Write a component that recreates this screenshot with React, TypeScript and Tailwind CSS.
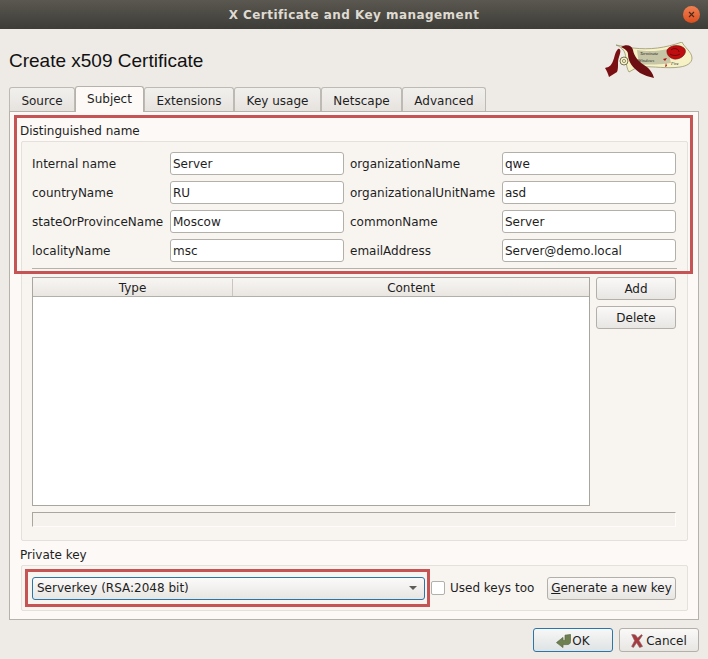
import React from 'react'

const tabs = ['Source', 'Subject', 'Extensions', 'Key usage', 'Netscape', 'Advanced']
const tabWidths: Record<string, string> = {
  Source: 'w-[66px]',
  Subject: 'w-[69px]',
  Extensions: 'w-[90px]',
  'Key usage': 'w-[87px]',
  Netscape: 'w-[81px]',
  Advanced: 'w-[84px]',
}

const fields = [
  ['Internal name', 'Server', 'organizationName', 'qwe'],
  ['countryName', 'RU', 'organizationalUnitName', 'asd'],
  ['stateOrProvinceName', 'Moscow', 'commonName', 'Server'],
  ['localityName', 'msc', 'emailAddress', 'Server@demo.local'],
]

function Field({ value }: { value: string }) {
  return (
    <div className="h-[23px] rounded-[3px] border border-[#b3b0aa] bg-white pl-[2px] pt-px leading-[21px] whitespace-nowrap">
      {value}
    </div>
  )
}

function Logo() {
  return (
    <svg width="88" height="38" viewBox="0 0 88 38" className="block">
      {/* scroll */}
      <path d="M11 3 L28 6 C45 8 60 6 77 0 C79 5 87 10 87 16 C87 21 82 24 75 25 C62 27 48 24 38 25 L31 26 L24 30 C20 24 22 14 19 9 C17 6 14 4 11 3 Z" fill="#f7f2c6" stroke="#8b8a62" strokeWidth="0.7" />
      <path d="M32 8 C44 10 54 9 63 7 L66 21 C56 23 44 22 34 23 Z" fill="#c6c6a6" />
      {/* ribbons */}
      <path d="M16 5 C21 2 27 3 28 8 C29 14 33 19 39 23 C44 26 48 31 49 36 C44 35 39 33 35 31 C28 26 23 20 23 12 C23 9 20 7 16 5 Z" fill="#6d0f12" />
      <path d="M13 7 C16 6 16 10 14 15 C12 20 14 25 12 30 L4 35 C3 32 2 29 0 26 C4 25 6 24 8 19 C10 14 10 10 13 7 Z" fill="#7a1014" />
      {/* spiral */}
      <circle cx="19" cy="19" r="4" fill="#f7f2c6" stroke="#5b5636" strokeWidth="0.8" />
      <circle cx="19" cy="19" r="1.6" fill="none" stroke="#5b5636" strokeWidth="0.6" />
      {/* rose */}
      <path d="M62 8 C65 3 74 2 79 6 C83 10 78 16 72 17 C66 18 61 13 62 8 Z" fill="#c00d10" stroke="#6d0f12" strokeWidth="0.6" />
      <path d="M66 8 C69 5 74 7 74 10 M65 12 C68 14 72 14 75 12" fill="none" stroke="#5c0508" strokeWidth="0.8" />
      <path d="M58 17 L62 16 L60 19 Z M61 21 L62 24 L60 25 Z" fill="#b01015" />
      <text x="35" y="13" fontSize="4.5" fontStyle="italic" fontFamily="Liberation Serif, serif" fill="#2a2a2a">Terminate</text>
      <text x="33" y="20" fontSize="4.5" fontStyle="italic" fontFamily="Liberation Serif, serif" fill="#2a2a2a">Windows</text>
      <text x="66" y="23" fontSize="4.5" fontStyle="italic" fontFamily="Liberation Serif, serif" fill="#2a2a2a">Fire</text>
    </svg>
  )
}

function OkIcon() {
  return (
    <svg width="15" height="14" viewBox="0 0 15 14" className="shrink-0">
      <path d="M9 1.2 L14.6 0.5 V7.5 C14.6 9.6 13 10.6 11 10.6 H7 V13.6 L0.5 8.6 L7 3.4 V6.4 H9 Z" fill="#6f8050" stroke="#56643f" strokeWidth="0.7" strokeLinejoin="round" />
    </svg>
  )
}

function CancelIcon() {
  return (
    <svg width="12" height="14" viewBox="0 0 12 14" className="shrink-0">
      <path d="M0.6 0.6 C2.4 0.4 4 0.6 5 1.4 L6.6 4 L10.4 0.6 L11.4 1.4 L8 6.4 L11.6 12.4 L8.6 13.5 L5.6 8.8 L2.4 13.5 L0.6 12.4 L3.6 6.8 Z" fill="#a8383d" stroke="#86686a" strokeWidth="0.6" strokeLinejoin="round" />
    </svg>
  )
}

const btn =
  'flex items-center justify-center rounded-[3px] border border-[#b3b0aa] bg-gradient-to-b from-[#faf9f8] to-[#e8e6e3] text-[#1c1c1c] whitespace-nowrap'

export default function App() {
  return (
    <div className="w-[708px] h-[659px] overflow-hidden flex flex-col bg-[#eeebe7] text-[#1e1e1e] text-[12px] font-['DejaVu_Sans',sans-serif]">
      {/* Title bar */}
      <div className="relative h-[29px] shrink-0 flex items-center justify-center bg-gradient-to-b from-[#5a5850] to-[#3d3c37] text-[#dfdbd2] font-bold text-[12px] tracking-[0.45px]">
        X Certificate and Key management
        <div className="absolute right-[8px] top-[6px] w-[17px] h-[17px] rounded-full bg-gradient-to-b from-[#f08050] to-[#dc4d1c] flex items-center justify-center">
          <svg width="7" height="7" viewBox="0 0 7 7">
            <path d="M1 1 L6 6 M6 1 L1 6" stroke="#4a2a1c" strokeWidth="1.1" />
          </svg>
        </div>
      </div>

      {/* Header */}
      <div className="h-[57px] shrink-0 flex items-end justify-between pl-[9px] pr-[15px]">
        <div className="text-[19px] leading-[22px] mb-[14px] text-[#111] font-['Liberation_Sans',sans-serif]">
          Create x509 Certificate
        </div>
        <div className="mb-[6px]">
          <Logo />
        </div>
      </div>

      {/* Tabs */}
      <div className="h-[25px] shrink-0 flex items-end pl-[9px] relative z-10">
        {tabs.map((t) =>
          t === 'Subject' ? (
            <div
              key={t}
              className={`${tabWidths[t]} h-[26px] -mb-px rounded-t-[3px] border border-b-0 border-[#b5b2ac] bg-[#fcf9f6] flex items-center justify-center pb-px`}
            >
              {t}
            </div>
          ) : (
            <div
              key={t}
              className={`${tabWidths[t]} h-[24px] rounded-t-[3px] border border-b-0 border-[#bdbab4] bg-gradient-to-b from-[#f2f0ed] to-[#e6e3df] flex items-center justify-center pt-[2px]`}
            >
              {t}
            </div>
          ),
        )}
      </div>

      {/* Panel */}
      <div className="relative mx-[9px] h-[509px] shrink-0 border border-[#b5b2ac] bg-[#fcf9f6] pl-[10px] pr-[10px] flex flex-col">
        <div className="h-[29px] shrink-0 flex items-end pb-[2px] leading-[15px]">Distinguished name</div>

        <div className="h-[400px] shrink-0 ml-px rounded-[2px] border border-[#e4e1dc] bg-[#f8f5f1] pt-[10px] px-[10px]">
          <div className="grid grid-cols-[138px_174px_158px_174px] gap-y-[6px] auto-rows-[23px] items-center">
            {fields.map((row) => (
              <React.Fragment key={row[0]}>
                <div className="whitespace-nowrap pt-px">{row[0]}</div>
                <Field value={row[1]} />
                <div className="pl-[6px] pt-px whitespace-nowrap">{row[2]}</div>
                <Field value={row[3]} />
              </React.Fragment>
            ))}
          </div>

          <div className="mt-[6px] h-px bg-[#b5b2ac]" />

          <div className="mt-[8px] flex gap-[6px]">
            <div className="w-[558px] h-[229px] border border-[#a9a6a0] bg-white">
              <div className="h-[19px] flex border-b border-[#b3b0aa] bg-gradient-to-b from-[#f8f6f3] to-[#e9e6e2] pt-px leading-[18px] text-center">
                <div className="w-[200px] border-r border-[#c9c6c0]">Type</div>
                <div className="flex-1">Content</div>
              </div>
            </div>
            <div className="w-[80px] flex flex-col gap-[6px]">
              <div className={`${btn} h-[23px] pt-px`}>Add</div>
              <div className={`${btn} h-[23px] pt-px`}>Delete</div>
            </div>
          </div>

          <div className="mt-[6px] h-[15px] w-[644px] border border-[#fdfcfa] border-t-[#a9a6a0] border-l-[#a9a6a0] bg-[#f5f2ee]" />
        </div>

        <div className="h-[24px] shrink-0 flex items-end pb-[2px] leading-[15px]">Private key</div>

        <div className="relative h-[46px] shrink-0 ml-px rounded-[2px] border border-[#e4e1dc] bg-[#f8f5f1] pl-[10px] pr-[11px] flex items-center">
          <div className="w-[393px] h-[23px] rounded-[3px] border border-[#2a76a8] bg-gradient-to-b from-[#fbfaf9] to-[#e8e6e3] pl-[4px] pr-[7px] flex items-center justify-between">
            <span>Serverkey (RSA:2048 bit)</span>
            <span className="w-0 h-0 border-x-[4px] border-x-transparent border-t-[4px] border-t-[#5e5c58]" />
          </div>
          <div className="ml-[6px] w-[14px] h-[14px] rounded-[2px] border border-[#b3b0aa] bg-white" />
          <div className="ml-[5px] whitespace-nowrap">Used keys too</div>
          <div className={`${btn} ml-auto w-[129px] h-[23px]`}>
            <span>
              <span className="underline">G</span>enerate a new key
            </span>
          </div>
        </div>

        {/* Highlight frames */}
        <div className="absolute left-[4px] top-[3px] w-[679px] h-[159px] border-[3px] border-[#c75454] pointer-events-none" />
        <div className="absolute left-[15px] top-[457px] w-[405px] h-[38px] border-[3px] border-[#c75454] pointer-events-none" />
      </div>

      {/* Footer */}
      <div className="flex justify-end gap-[6px] pr-[9px] pt-[8px]">
        <div className="w-[80px] h-[24px] pt-px flex items-center justify-center gap-px rounded-[3px] border border-[#2a76a8] bg-gradient-to-b from-[#f7f7f6] to-[#dfe3e4]">
          <OkIcon />
          OK
        </div>
        <div className={`${btn} w-[80px] h-[24px] pt-px gap-[3px]`}>
          <CancelIcon />
          Cancel
        </div>
      </div>
    </div>
  )
}
